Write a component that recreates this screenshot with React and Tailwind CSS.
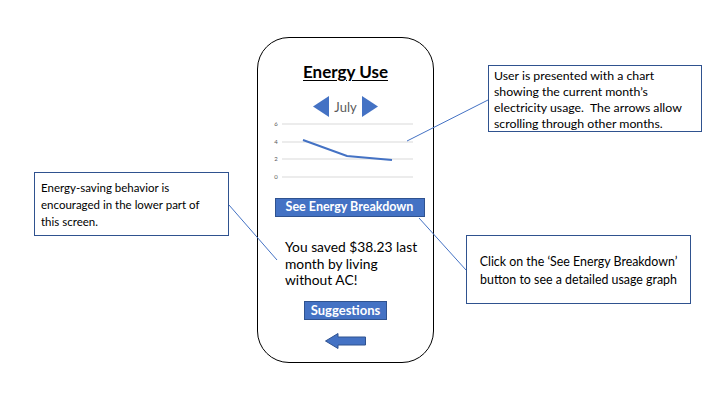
export default function App() {
  const font = { fontFamily: "Lato, 'Open Sans', sans-serif" };
  return (
    <div className="relative w-[720px] h-[405px] bg-white overflow-hidden text-black" style={font}>
      {/* Phone */}
      <div className="absolute left-[257px] top-[37px] w-[177px] h-[326px] rounded-[32px] border-[1.5px] border-black flex flex-col items-center">
        <div className="mt-[24px] text-[17px] leading-[20px] font-bold underline underline-offset-2">Energy Use</div>
        <div className="mt-[14px] h-[21px] flex items-center gap-[4px]">
          <svg width="16" height="21" viewBox="0 0 16 21"><polygon points="16,0 0,10.5 16,21" fill="#4472C4" /></svg>
          <span className="text-[13px] leading-[16px] text-[#595959] mx-[1px]">July</span>
          <svg width="16" height="21" viewBox="0 0 16 21"><polygon points="0,0 16,10.5 0,21" fill="#4472C4" /></svg>
        </div>
        <svg className="mt-[2px] self-start" width="174" height="65" viewBox="0 0 174 65">
          {[5, 23, 40, 58].map((y, i) => (
            <g key={y}>
              <line x1="24" x2="155" y1={y} y2={y} stroke="#D9D9D9" strokeWidth="1" />
              <text x="18" y={y + 2} fontSize="6" fill="#595959" textAnchor="middle" style={font}>{[6, 4, 2, 0][i]}</text>
            </g>
          ))}
          <polyline points="45,21 89,37 134,41" fill="none" stroke="#4472C4" strokeWidth="2" />
        </svg>
        <div className="mt-[14px] ml-[8px] w-[150px] h-[19px] bg-[#4472C4] border border-[#2F528F] text-white text-[12.5px] font-bold flex items-center justify-center leading-none">See Energy Breakdown</div>
        <div className="mt-[22px] self-start ml-[27px] text-[13.8px] leading-[16.5px]">You saved $38.23 last<br />month by living<br />without AC!</div>
        <div className="mt-[12px] w-[83px] h-[19px] bg-[#4472C4] border border-[#2F528F] text-white text-[13px] font-bold flex items-center justify-center leading-none">Suggestions</div>
        <svg className="mt-[13px]" width="41" height="16" viewBox="0 0 41 16">
          <polygon points="0.5,8 13,0.5 13,4 40.5,4 40.5,12 13,12 13,15.5" fill="#4472C4" stroke="#2F528F" strokeWidth="1" />
        </svg>
      </div>

      {/* Callouts */}
      <div className="absolute left-[34px] top-[172px] w-[195px] h-[64px] border border-[#2F528F] px-[6px] pt-[6px] text-[11.5px] leading-[17px]">
        Energy-saving behavior is<br />encouraged in the lower part of<br />this screen.
      </div>
      <div className="absolute left-[488px] top-[65px] w-[214px] h-[67px] border border-[#2F528F] px-[5px] pt-[2px] text-[12.3px] leading-[16px]">
        User is presented with a chart<br />showing the current month’s<br />electricity usage.&nbsp; The arrows allow<br />scrolling through other months.
      </div>
      <div className="absolute left-[466px] top-[235px] w-[225px] h-[69px] border border-[#2F528F] flex items-center justify-center text-center text-[12.4px] leading-[18px]">
        <div className="mt-[2px]">Click on the ‘See Energy Breakdown’<br />button to see a detailed usage graph</div>
      </div>

      {/* Connectors */}
      <svg className="absolute left-0 top-0 pointer-events-none" width="720" height="405">
        <line x1="229" y1="205" x2="277" y2="260" stroke="#4472C4" strokeWidth="1" />
        <line x1="488" y1="100" x2="407" y2="141" stroke="#4472C4" strokeWidth="1" />
        <line x1="466" y1="270" x2="419" y2="218" stroke="#4472C4" strokeWidth="1" />
      </svg>
    </div>
  );
}
